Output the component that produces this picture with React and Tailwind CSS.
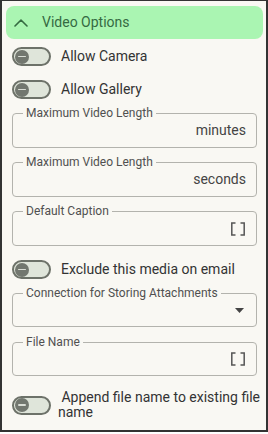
import React from "react";

const Toggle = () => (
  <div className="relative w-[39px] h-[19px] shrink-0 rounded-full border-2 border-[#6d7269] bg-[#dfe5da]">
    <div className="absolute left-[1px] top-[0.5px] w-[14px] h-[14px] rounded-full bg-[#72776f] flex items-center justify-center">
      <div className="w-[8px] h-[1.5px] bg-[#d9ddd5] rounded" />
    </div>
  </div>
);

const ToggleRow = ({ label, className = "" }) => (
  <div className={"flex items-center h-[19px] " + className}>
    <Toggle />
    <span className="ml-[10px] text-[14px] text-[#333] leading-[19px] whitespace-nowrap">{label}</span>
  </div>
);

const BracketIcon = () => (
  <svg width="16" height="14" viewBox="0 0 16 14" fill="none" stroke="#555" strokeWidth="1.5">
    <path d="M5.5 1H1.8v12h3.7" />
    <path d="M10.5 1h3.7v12h-3.7" />
  </svg>
);

const Field = ({ label, h = "h-[35px]", children, className = "" }) => (
  <div className={"relative w-[245px] rounded-[4px] border border-[#b3b3ad] flex items-center justify-end pr-[10px] " + h + " " + className}>
    <span className="absolute left-[10px] top-[-9px] px-[3px] bg-[#f9f8f3] text-[12px] leading-[16px] text-[#505050] whitespace-nowrap">
      {label}
    </span>
    {children}
  </div>
);

export default function App() {
  return (
    <div className="w-[268px] h-[434px] bg-white" style={{ fontFamily: "Roboto, 'Liberation Sans', sans-serif" }}>
      <div className="h-[432px] border-t border-x-2 border-b-2 border-[#333] bg-[#f9f8f3] flex flex-col">
        <div className="mt-[5px] ml-[4px] mr-[3px] h-[33px] rounded-[8px] bg-[#aaf5b2] flex items-center pl-[8px]">
          <svg width="14" height="8" viewBox="0 0 14 8" fill="none" stroke="#356a42" strokeWidth="1.6" strokeLinecap="round" strokeLinejoin="round">
            <path d="M1 7l6-6 6 6" />
          </svg>
          <span className="ml-[14px] text-[14px] text-[#356a42]">Video Options</span>
        </div>
        <div className="pl-[10px] flex flex-col">
          <ToggleRow label="Allow Camera" className="mt-[8px]" />
          <ToggleRow label="Allow Gallery" className="mt-[14px]" />
          <Field label="Maximum Video Length" className="mt-[14px]">
            <span className="text-[14px] text-[#444] pb-[1px]">minutes</span>
          </Field>
          <Field label="Maximum Video Length" className="mt-[14px]">
            <span className="text-[14px] text-[#444] pb-[1px]">seconds</span>
          </Field>
          <Field label="Default Caption" className="mt-[14px]">
            <BracketIcon />
          </Field>
          <ToggleRow label="Exclude this media on email" className="mt-[14px]" />
          <Field label="Connection for Storing Attachments" h="h-[34px]" className="mt-[14px] pr-[12px]">
            <svg width="9" height="5" viewBox="0 0 9 5">
              <path d="M0 0h9L4.5 5z" fill="#444" />
            </svg>
          </Field>
          <Field label="File Name" h="h-[34px]" className="mt-[15px]">
            <BracketIcon />
          </Field>
          <div className="flex items-center mt-[14px]">
            <Toggle />
            <span className="ml-[7px] w-[206px] text-[14px] leading-[15px] text-[#333]">
              {"\u00a0"}Append file name to existing file name
            </span>
          </div>
        </div>
      </div>
    </div>
  );
}
